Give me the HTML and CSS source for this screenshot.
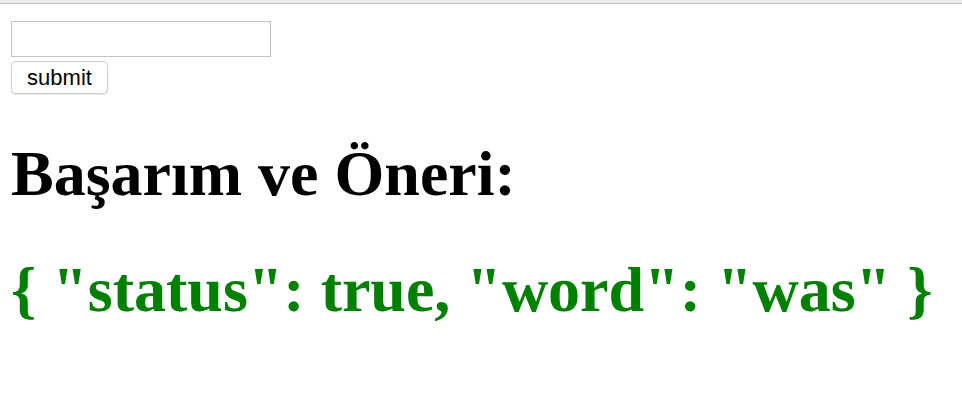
FILE: index.html
```html
<!DOCTYPE html>
<html lang="tr">
<head>
<meta charset="utf-8">
<title>Başarım</title>
<link rel="stylesheet" href="styles.css">
</head>
<body>
<div class="chrome"></div>
<main class="page">
  <form class="form">
    <input class="field" type="text">
    <button class="btn" type="button">submit</button>
  </form>
  <h1 class="title">Başarım ve Öneri:</h1>
  <h1 class="result">{ "status": true, "word": "was" }</h1>
</main>
</body>
</html>
```
FILE: styles.css
```css
html, body {
  margin: 0;
  padding: 0;
  background: #fff;
}
body {
  font-family: "Liberation Serif", "Times New Roman", serif;
}
.chrome {
  height: 3px;
  background: #ececec;
  border-bottom: 1px solid #c4c4c4;
}
.page {
  padding: 17px 11px 0 11px;
}
.form {
  display: flex;
  flex-direction: column;
  align-items: flex-start;
  gap: 4px;
}
.field {
  box-sizing: border-box;
  width: 260px;
  height: 36px;
  margin: 0;
  border: 1px solid #c2c2c2;
  border-radius: 0;
  background: #fff;
  padding: 0 4px;
  font-size: 20px;
}
.btn {
  box-sizing: border-box;
  width: 97px;
  height: 33px;
  margin: 0;
  padding: 0;
  border: 1px solid #cfcfcf;
  border-radius: 5px;
  background: #fff;
  box-shadow: 0 1px 1px rgba(0,0,0,0.12);
  font-family: "Liberation Sans", Arial, sans-serif;
  font-size: 22px;
  color: #000;
  line-height: 1;
}
.title, .result {
  font-family: "Liberation Serif", "Times New Roman", serif;
  font-weight: bold;
  font-size: 64px;
  line-height: 1.15;
  margin: 0;
}
.title {
  margin-top: 43px;
  color: #000;
}
.result {
  margin-top: 42px;
  color: #008000;
}
```
